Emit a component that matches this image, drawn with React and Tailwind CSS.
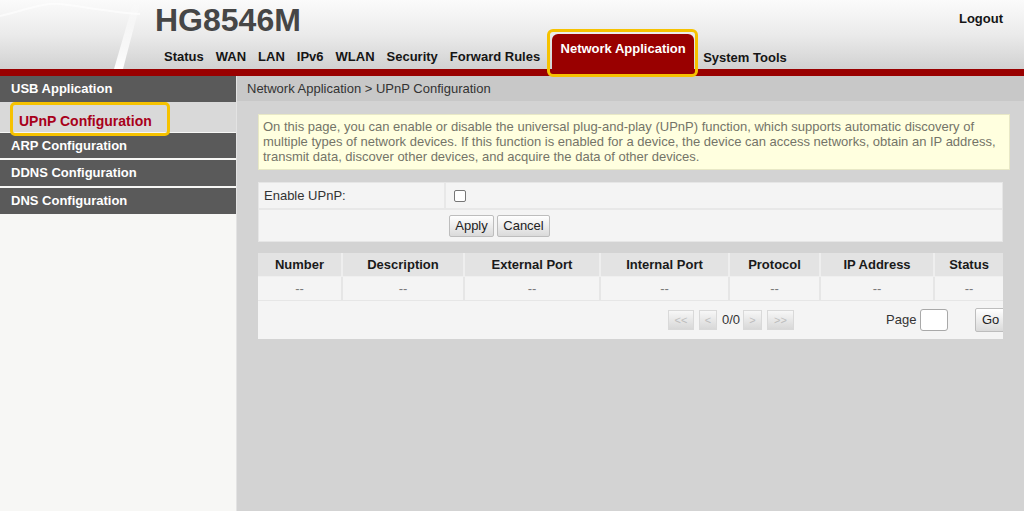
import React from "react";

function NavItem({ children }) {
  return <span className="pb-[5px] text-[13px] leading-[15px] font-bold text-[#151515] whitespace-nowrap">{children}</span>;
}

function SideItem({ children, className = "" }) {
  return (
    <div className={"bg-[#5a5a5a] text-white font-bold text-[13px] pl-[11px] " + className}>{children}</div>
  );
}

function PagerBtn({ children, w, className = "" }) {
  return (
    <span
      className={
        "shrink-0 h-[20px] border border-[#d9d9d9] bg-gradient-to-b from-[#f7f7f7] to-[#d8d8d8] text-[11px] leading-[18px] text-[#bdbdbd] text-center " +
        className
      }
      style={{ width: w }}
    >
      {children}
    </span>
  );
}

export default function App() {
  const nav = ["Status", "WAN", "LAN", "IPv6", "WLAN", "Security", "Forward Rules"];
  const cols = [
    ["Number", 85],
    ["Description", 122],
    ["External Port", 136],
    ["Internal Port", 129],
    ["Protocol", 91],
    ["IP Address", 114],
    ["Status", 68],
  ];
  return (
    <div className="w-[1024px] h-[511px] overflow-hidden flex flex-col font-['Liberation_Sans',Arial,sans-serif] bg-[#d3d3d3]">
      {/* Header */}
      <header className="relative h-[69px] bg-gradient-to-b from-[#fbfbfb] via-[#ebebeb] to-[#d1d1d1] flex flex-col">
        <svg className="absolute left-0 top-0" width="170" height="69" viewBox="0 0 170 69">
          <defs>
            <linearGradient id="sw" x1="0" y1="0" x2="0" y2="1">
              <stop offset="0" stopColor="#ffffff" stopOpacity="0" />
              <stop offset="0.5" stopColor="#ffffff" stopOpacity="0.6" />
              <stop offset="1" stopColor="#ffffff" stopOpacity="1" />
            </linearGradient>
          </defs>
          <polygon points="134,0 141,0 123,69 114,69" fill="url(#sw)" />
          <path d="M0 16 C 25 10, 45 2, 60 4 C 80 6, 110 12, 140 14" stroke="#ffffff" strokeOpacity="0.6" strokeWidth="2" fill="none" />
        </svg>
        <div className="relative h-[34px] flex items-start justify-between pl-[155px] pr-[21px]">
          <span className="mt-[2px] text-[32px] leading-[36px] font-bold text-[#464646]">HG8546M</span>
          <span className="mt-[11px] text-[13px] leading-[15px] font-bold text-[#151515]">Logout</span>
        </div>
        <nav className="relative h-[35px] flex items-end pl-[164px] gap-[12px]">
          {nav.map((n) => (
            <NavItem key={n}>{n}</NavItem>
          ))}
          <span className="relative w-[142px] h-[35px] bg-[#990000] rounded-t-[6px] pt-[7px] text-center text-[13px] leading-[15px] font-bold text-white whitespace-nowrap">
            Network Application
            <span className="absolute -left-[5px] -right-[4px] -top-[5px] -bottom-[8px] border-[3px] border-[#f6c200] rounded-[6px] z-10" />
          </span>
          <span className="-ml-[3px]">
            <NavItem>System Tools</NavItem>
          </span>
        </nav>
      </header>
      <div className="h-[7px] bg-[#990000]" />

      <div className="flex flex-1 min-h-0">
        {/* Sidebar */}
        <aside className="shrink-0 w-[237px] bg-[#f7f7f5] border-r border-[#e3e3e3] flex flex-col">
          <SideItem className="h-[26px] leading-[26px]">USB Application</SideItem>
          <div className="relative h-[30px] bg-[#d9d9d9] mb-[1px]">
            <div className="pl-[19px] pt-[12px] text-[14px] leading-[15px] font-bold text-[#a8001a]">UPnP Configuration</div>
            <span className="absolute left-[10px] top-0 w-[160px] h-[34px] border-[3px] border-[#f6c200] rounded-[5px] z-10" />
          </div>
          <SideItem className="h-[25px] leading-[25px] mb-[2px]">ARP Configuration</SideItem>
          <SideItem className="h-[26px] leading-[26px] mb-[2px]">DDNS Configuration</SideItem>
          <SideItem className="h-[26px] leading-[26px]">DNS Configuration</SideItem>
        </aside>

        {/* Main */}
        <main className="flex-1 min-w-0 flex flex-col">
          <div className="h-[25px] bg-[#c8c8c8] pl-[10px] text-[13px] leading-[25px] text-[#333]">
            Network Application &gt; UPnP Configuration
          </div>
          <div className="min-w-0 pl-[21px] pr-[14px] pt-[13px]">
            <div className="h-[56px] border border-[#e8e8c6] bg-[#ffffdf] px-[4px] pt-[4px] text-[13px] leading-[15px] text-[#747468] overflow-hidden">
              <div className="whitespace-nowrap">
                On this page, you can enable or disable the universal plug-and-play (UPnP) function, which supports automatic discovery of
              </div>
              <div className="whitespace-nowrap">
                multiple types of network devices. If this function is enabled for a device, the device can access networks, obtain an IP address,
              </div>
              <div className="whitespace-nowrap">transmit data, discover other devices, and acquire the data of other devices.</div>
            </div>

            {/* Form */}
            <div className="mt-[12px] mr-[7px] border border-[#e6e6e6] bg-[#f4f4f4]">
              <div className="h-[25px] flex border-b-2 border-[#e8e8e8] box-content">
                <div className="w-[187px] border-r-2 border-[#e8e8e8] pl-[5px] text-[13px] leading-[25px] text-[#333]">Enable UPnP:</div>
                <div className="flex-1 flex items-center pl-[8px]">
                  <span className="w-[12px] h-[12px] border border-[#767676] rounded-[2px] bg-white" />
                </div>
              </div>
              <div className="h-[31px] flex items-center pl-[190px] gap-[3px]">
                <button className="w-[45px] h-[22px] border border-[#bdbdbd] rounded-[2px] bg-gradient-to-b from-[#ffffff] to-[#dadada] text-[13px] text-[#222]">
                  Apply
                </button>
                <button className="w-[53px] h-[22px] border border-[#bdbdbd] rounded-[2px] bg-gradient-to-b from-[#ffffff] to-[#dadada] text-[13px] text-[#222]">
                  Cancel
                </button>
              </div>
            </div>

            {/* Table */}
            <div className="mt-[11px] mr-[7px] overflow-hidden bg-[#f4f4f4]">
              <div className="h-[23px] flex bg-[#e3e3e3] border-b border-[#efefef] box-content">
                {cols.map(([c, w], i) => (
                  <div
                    key={c}
                    className={
                      "shrink-0 text-center text-[13px] leading-[23px] font-bold text-[#1a1a1a] " +
                      (i < cols.length - 1 ? "border-r-2 border-[#eeeeee]" : "")
                    }
                    style={{ width: w }}
                  >
                    {c}
                  </div>
                ))}
              </div>
              <div className="h-[23px] flex border-b border-[#e6e6e6] box-content">
                {cols.map(([c, w], i) => (
                  <div
                    key={c}
                    className={
                      "shrink-0 text-center text-[13px] leading-[23px] text-[#7a7a7a] " +
                      (i < cols.length - 1 ? "border-r-2 border-[#e6e6e6]" : "")
                    }
                    style={{ width: w }}
                  >
                    --
                  </div>
                ))}
              </div>
              <div className="h-[38px] flex items-center pl-[410px] whitespace-nowrap">
                <PagerBtn w={26}>&lt;&lt;</PagerBtn>
                <PagerBtn w={18} className="ml-[5px]">&lt;</PagerBtn>
                <span className="shrink-0 ml-[5px] w-[18px] text-[13px] text-[#333]">0/0</span>
                <PagerBtn w={19} className="ml-[3px]">&gt;</PagerBtn>
                <PagerBtn w={27} className="ml-[5px]">&gt;&gt;</PagerBtn>
                <span className="shrink-0 ml-[92px] w-[30px] text-[13px] text-[#333]">Page</span>
                <span className="shrink-0 ml-[4px] w-[28px] h-[22px] bg-white border border-[#a9a9a9] rounded-[3px]" />
                <button className="shrink-0 ml-[27px] w-[32px] h-[24px] border border-[#bdbdbd] rounded-[2px] bg-gradient-to-b from-[#ffffff] to-[#dadada] text-[13px] text-[#222] text-left pl-[6px]">
                  Go
                </button>
              </div>
            </div>
          </div>
        </main>
      </div>
    </div>
  );
}
